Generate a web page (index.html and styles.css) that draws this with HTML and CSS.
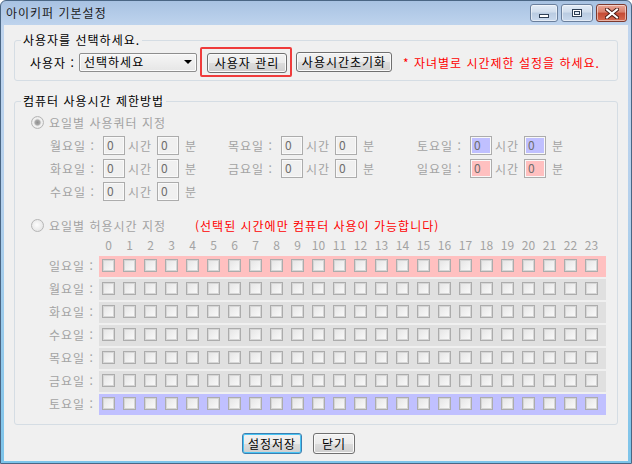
FILE: index.html
```html
<!DOCTYPE html>
<html lang="ko">
<head>
    <meta charset="UTF-8">
    <meta name="viewport" content="width=device-width, initial-scale=1.0">
    <title>아이키퍼 기본설정</title>
    <link rel="stylesheet" href="styles.css">
</head>
<body>
    <div class="window">
        <div class="titlebar">
            <span class="title">아이키퍼 기본설정</span>
            <div class="caption">
                <span class="cbtn min">
                    <svg width="12" height="6" viewBox="0 0 12 6"><rect x="1.5" y="1.5" width="9" height="3" fill="#fff" stroke="#2e3f56"/></svg>
                </span>
                <span class="cbtn max">
                    <svg width="12" height="10" viewBox="0 0 12 10"><rect x="1.5" y="1.5" width="9" height="7" fill="#fff" stroke="#2e3f56"/><rect x="3.5" y="3.5" width="5" height="3" fill="#dfe8f4" stroke="#2e3f56"/></svg>
                </span>
                <span class="cbtn close">
                    <svg width="14" height="11" viewBox="0 0 14 11"><path d="M2 1.5 L12 9.5 M12 1.5 L2 9.5" stroke="#4a1a12" stroke-width="4" stroke-linecap="square"/><path d="M2 1.5 L12 9.5 M12 1.5 L2 9.5" stroke="#fff" stroke-width="2" stroke-linecap="square"/></svg>
                </span>
            </div>
        </div>

        <div class="client">
            <fieldset class="group user-group">
                <legend>사용자를 선택하세요.</legend>
                <div class="user-row">
                    <label class="user-label">사용자 :</label>
                    <div class="combo">선택하세요<span class="arrow"></span></div>
                    <div class="highlight"><button class="btn manage">사용자 관리</button></div>
                    <button class="btn reset">사용시간초기화</button>
                    <span class="notice">* 자녀별로 시간제한 설정을 하세요.</span>
                </div>
            </fieldset>

            <fieldset class="group limit-group">
                <legend>컴퓨터 사용시간 제한방법</legend>

                <div class="option first">
                    <span class="radio on"></span>
                    <span class="opt-label">요일별 사용쿼터 지정</span>
                </div>

                <div class="quota">
                    <div class="q"><span class="day">월요일 :</span><span class="tb">0</span><span class="unit">시간</span><span class="tb">0</span><span class="min">분</span></div>
                    <div class="q"><span class="day">목요일 :</span><span class="tb">0</span><span class="unit">시간</span><span class="tb">0</span><span class="min">분</span></div>
                    <div class="q"><span class="day">토요일 :</span><span class="tb sat">0</span><span class="unit">시간</span><span class="tb sat">0</span><span class="min">분</span></div>
                    <div class="q"><span class="day">화요일 :</span><span class="tb">0</span><span class="unit">시간</span><span class="tb">0</span><span class="min">분</span></div>
                    <div class="q"><span class="day">금요일 :</span><span class="tb">0</span><span class="unit">시간</span><span class="tb">0</span><span class="min">분</span></div>
                    <div class="q"><span class="day">일요일 :</span><span class="tb sun">0</span><span class="unit">시간</span><span class="tb sun">0</span><span class="min">분</span></div>
                    <div class="q"><span class="day">수요일 :</span><span class="tb">0</span><span class="unit">시간</span><span class="tb">0</span><span class="min">분</span></div>
                </div>

                <div class="option second">
                    <span class="radio"></span>
                    <span class="opt-label wide">요일별 허용시간 지정</span>
                    <span class="red-note">(선택된 시간에만 컴퓨터 사용이 가능합니다)</span>
                </div>

                <div class="schedule">
                    <div class="hours">
                        <span class="name"></span>
                        <div class="cells" id="hours"></div>
                    </div>
                    <div class="rows" id="rows"></div>
                </div>
            </fieldset>

            <div class="footer">
                <button class="btn save">설정저장</button>
                <button class="btn close-btn">닫기</button>
            </div>
        </div>
    </div>

    <script>
        var days = [
            ["일요일 :", "sun"],
            ["월요일 :", ""],
            ["화요일 :", ""],
            ["수요일 :", ""],
            ["목요일 :", ""],
            ["금요일 :", ""],
            ["토요일 :", "sat"]
        ];

        var hours = document.getElementById("hours");
        for (let h = 0; h < 24; h++){
            let s = document.createElement("span");
            s.innerText = h;
            hours.appendChild(s);
        }

        var rows = document.getElementById("rows");
        days.forEach(function(d){
            let row = document.createElement("div");
            row.className = "day-row";
            let name = document.createElement("span");
            name.className = "name";
            name.innerText = d[0];
            row.appendChild(name);
            let cells = document.createElement("div");
            cells.className = "cells " + d[1];
            for (let h = 0; h < 24; h++){
                let c = document.createElement("span");
                c.className = "chk";
                cells.appendChild(c);
            }
            row.appendChild(cells);
            rows.appendChild(row);
        });
    </script>
</body>
</html>
```

FILE: styles.css
```css
*{
    margin: 0;
    padding: 0;
    box-sizing: border-box;
}
body{
    background-color: #ffffff;
    font-family: "Noto Sans CJK KR", "Noto Sans", sans-serif;
    font-size: 12px;
    letter-spacing: 1px;
    color: #000;
}
.window{
    width: 632px;
    height: 464px;
    border: 1px solid #4a6684;
    border-radius: 6px 6px 0 0;
    background: linear-gradient(#a8c2e2, #c0d5ee 26px, #b4d0ec 200px, #7cc4ea);
    display: flex;
    flex-direction: column;
}
.titlebar{
    height: 24px;
    display: flex;
    align-items: center;
    padding: 0 4px 0 5px;
}
.title{
    flex: 1;
    line-height: 14px;
    color: #1b1b1b;
}
.caption{
    display: flex;
    gap: 3px;
}
.cbtn{
    height: 18px;
    width: 30px;
    border: 1px solid #6a7f9c;
    border-radius: 3px;
    display: flex;
    align-items: center;
    justify-content: center;
    background: linear-gradient(#e3ecf7, #cfdcec 45%, #b9cbe1 50%, #c9d9ed);
    box-shadow: inset 0 0 0 1px rgba(255,255,255,0.5);
}
.cbtn.min{
    width: 28px;
}
.cbtn.min svg{
    margin-top: 6px;
}
.cbtn.max{
    width: 32px;
}
.cbtn.close{
    width: 31px;
    border-color: #7d3a2e;
    background: linear-gradient(#e9a595, #d8806c 45%, #c44a33 50%, #d66a4f);
}
.client{
    flex: 1;
    margin: 0 3px 2px 3px;
    background-color: #f0f0f0;
    padding: 0 10px;
}
.group{
    border: 1px solid #d5dde4;
    border-radius: 3px;
}
.group legend{
    margin-left: 6px;
    padding: 0 2px;
    line-height: 14px;
}
.user-group{
    margin-top: 8px;
    padding-bottom: 3px;
}
.user-row{
    display: flex;
    align-items: center;
    height: 30px;
    padding-left: 15px;
}
.user-label{
    width: 49px;
}
.combo{
    width: 118px;
    height: 19px;
    border: 1px solid #8e8e8e;
    border-radius: 2px;
    background: linear-gradient(#f6f6f6, #e6e6e6);
    box-shadow: inset 0 0 0 1px #fbfbfb;
    display: flex;
    align-items: center;
    padding-left: 4px;
    line-height: 14px;
}
.arrow{
    margin-left: auto;
    margin-right: 4px;
    border-left: 4px solid transparent;
    border-right: 4px solid transparent;
    border-top: 4px solid #000;
}
.highlight{
    margin-left: 3px;
    border: 2px solid #ef3b3b;
    border-radius: 2px;
    padding: 4px 3px 2px 5px;
}
.btn{
    height: 20px;
    padding: 0;
    font-family: inherit;
    font-size: 12px;
    letter-spacing: 1px;
    line-height: 14px;
    color: #000;
    border: 1px solid #707070;
    border-radius: 3px;
    background: linear-gradient(#f2f2f2, #ebebeb 50%, #dddddd 50%, #cfcfcf);
    box-shadow: inset 0 0 0 1px #fafafa;
    display: block;
}
.manage{
    width: 80px;
}
.reset{
    width: 96px;
    margin-left: 4px;
}
.notice{
    margin-left: 11px;
    color: #ff0000;
}
.limit-group{
    margin-top: 13px;
    padding-bottom: 9px;
}
.option{
    display: flex;
    align-items: center;
    height: 16px;
    margin-left: 16px;
    color: #a3a3a3;
}
.option.first{
    margin-top: 6px;
}
.option.second{
    margin-top: 16px;
}
.radio{
    width: 13px;
    height: 13px;
    border-radius: 50%;
    border: 1px solid #b6b6b6;
    background: radial-gradient(circle at 45% 45%, #fdfdfd, #dedede);
    margin-right: 5px;
}
.radio.on{
    background: radial-gradient(circle, #8f8f8f 0, #a9a9a9 2.5px, #e4e4e4 3.5px, #f4f4f4 4.5px, #dcdcdc 6px);
}
.opt-label.wide{
    width: 146px;
}
.red-note{
    color: #ff0000;
}
.quota{
    display: grid;
    grid-template-columns: 178px 189px auto;
    row-gap: 4px;
    margin: 6px 0 0 35px;
}
.q{
    display: flex;
    align-items: center;
    height: 19px;
    color: #a3a3a3;
}
.q .day{
    width: 53px;
}
.tb{
    width: 22px;
    height: 19px;
    border: 1px solid #acacac;
    box-shadow: inset 0 0 0 1px #f9f9f9;
    color: #6d6d6d;
    padding: 0 3px;
    line-height: 15px;
}
.tb.sat{
    background-color: #c0c0ff;
}
.tb.sun{
    background-color: #ffc0c0;
}
.q .unit{
    width: 32px;
    padding-left: 3px;
}
.q .min{
    margin-left: 6px;
}
.schedule{
    margin: 5px 0 0 34px;
}
.hours, .day-row{
    display: flex;
}
.hours{
    height: 14px;
    margin-bottom: 4px;
    letter-spacing: 0;
}
.name{
    width: 50px;
    color: #a3a3a3;
    line-height: 19px;
}
.cells{
    display: grid;
    grid-template-columns: repeat(24, 21px);
    padding-right: 3px;
}
.hours span:not(.name){
    text-align: center;
    padding-right: 2px;
    color: #a3a3a3;
    line-height: 14px;
}
.rows{
    display: flex;
    flex-direction: column;
    gap: 2px;
}
.day-row .cells{
    height: 21px;
    background-color: #e0e0e0;
}
.day-row .cells.sun{
    background-color: #ffc0c0;
}
.day-row .cells.sat{
    background-color: #c0c0ff;
}
.chk{
    width: 13px;
    height: 13px;
    margin: 3px 0 0 3px;
    border: 1px solid #acacac;
    background: linear-gradient(135deg, #e4e4e4, #fbfbfb);
    box-shadow: inset 0 0 0 1px #d6d6d6;
}
.footer{
    display: flex;
    justify-content: center;
    gap: 11px;
    margin-top: 8px;
    padding-right: 35px;
}
.save{
    width: 60px;
    height: 21px;
    border-color: #3c7fb1;
    box-shadow: inset 0 0 0 1px #48c4f4;
}
.close-btn{
    width: 42px;
    height: 21px;
}
```
